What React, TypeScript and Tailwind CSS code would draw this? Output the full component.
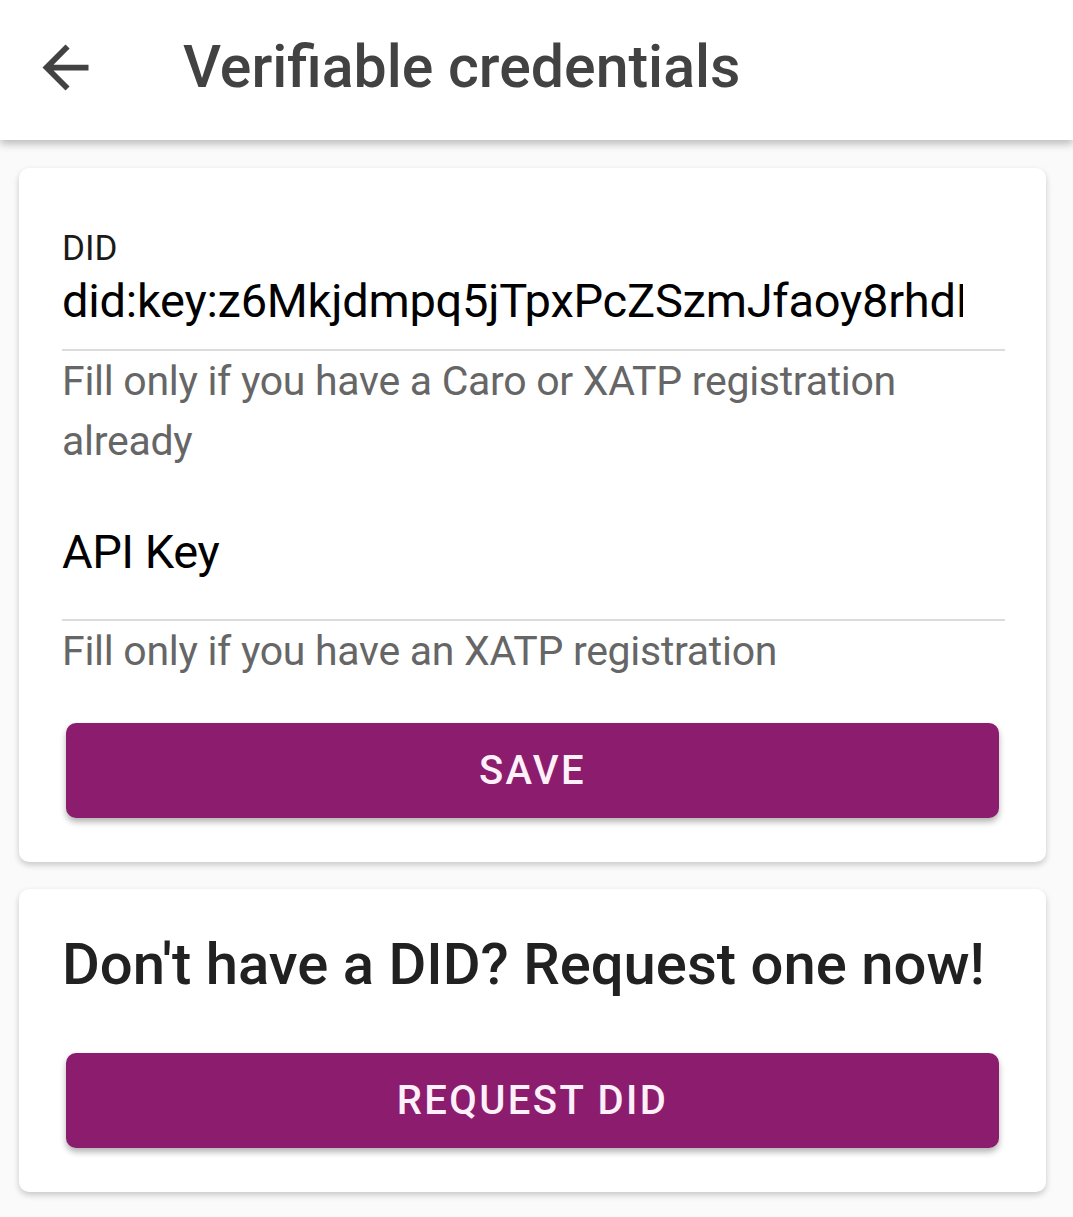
import React from "react";

function BackArrow() {
  return (
    <svg width="69" height="69" viewBox="0 0 24 24" className="block">
      <path
        d="M20 11H7.83l5.59-5.59L12 4l-8 8 8 8 1.41-1.41L7.83 13H20v-2z"
        fill="#424242"
      />
    </svg>
  );
}

export default function App() {
  return (
    <div
      className="min-h-[1217px] w-[1073px] bg-[#fafafa]"
      style={{ fontFamily: "Roboto, 'Noto Sans', sans-serif" }}
    >
      <header className="relative z-10 flex h-[140px] items-center bg-white pb-[6px] shadow-[0_4px_8px_rgba(0,0,0,0.25)]">
        <div className="ml-[31px] flex h-[69px] w-[69px] items-center justify-center">
          <BackArrow />
        </div>
        <h1 className="ml-[83px] text-[59px] font-medium leading-[68px] text-[#424242]">
          Verifiable credentials
        </h1>
      </header>

      <main className="flex flex-col gap-[27px] pl-[19px] pr-[27px] pt-[28px]">
        <section className="rounded-[10px] bg-white pl-[43px] pr-[41px] pt-[60px] pb-[44px] shadow-[0_3px_6px_rgba(0,0,0,0.2)]">
          <div>
            <label className="block text-[35px] leading-[41px] text-[#1a1a1a]">DID</label>
            <input
              readOnly
              value="did:key:z6Mkjdmpq5jTpxPcZSzmJfaoy8rhdEqwXn4"
              className="mt-[4px] mb-[21px] block h-[55px] w-[901px] bg-transparent p-0 text-[47px] leading-[55px] tracking-[-0.005em] text-black outline-none"
            />
            <div className="h-[2px] bg-[#dcdcdc]" />
            <p className="text-[41px] leading-[60px] tracking-[-0.007em] text-[#666666]">
              Fill only if you have a Caro or XATP registration already
            </p>

            <div className="mt-[8px] pt-[45px]">
              <div className="pb-[40px] text-[47px] leading-[55px] tracking-[-0.01em] text-black">API Key</div>
            </div>
            <div className="h-[2px] bg-[#dcdcdc]" />
            <p className="text-[41px] leading-[60px] tracking-[-0.007em] text-[#666666]">
              Fill only if you have an XATP registration
            </p>
          </div>

          <button className="mt-[42px] ml-[4px] flex h-[95px] w-[933px] items-center justify-center rounded-[10px] bg-[#8c1c6e] text-[40px] font-medium tracking-[0.06em] text-[#fdf0f8] shadow-[0_4px_6px_rgba(0,0,0,0.3)]">
            SAVE
          </button>
        </section>

        <section className="rounded-[10px] bg-white pl-[43px] pr-[41px] pt-[40px] pb-[44px] shadow-[0_3px_6px_rgba(0,0,0,0.2)]">
          <h2 className="whitespace-nowrap text-[58px] font-medium leading-[70px] text-[#212121]">
            Don't have a DID? Request one now!
          </h2>
          <button className="mt-[54px] ml-[4px] flex h-[95px] w-[933px] items-center justify-center rounded-[10px] bg-[#8c1c6e] text-[40px] font-medium tracking-[0.06em] text-[#fdf0f8] shadow-[0_4px_6px_rgba(0,0,0,0.3)]">
            REQUEST DID
          </button>
        </section>
      </main>
    </div>
  );
}
